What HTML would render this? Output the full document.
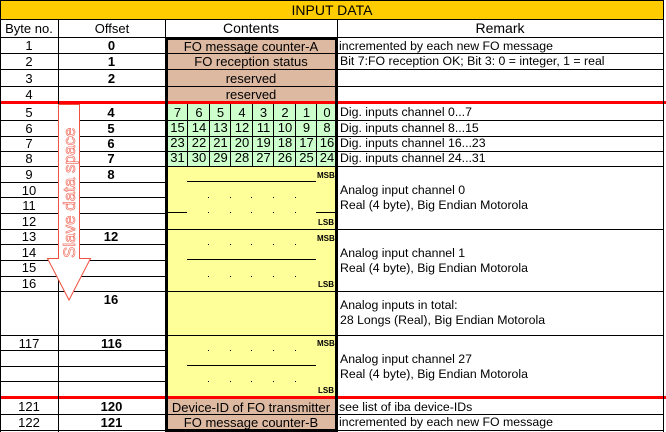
<!DOCTYPE html>
<html><head><style>
*{margin:0;padding:0;box-sizing:border-box}
body{width:666px;height:432px;background:#fff;position:relative;overflow:hidden;font-family:"Liberation Sans",Arial,sans-serif;font-size:12.3px;color:#000}
div{position:absolute}
.h{height:1px;background:#000}
.v{width:1px;background:#000}
.t{white-space:nowrap;line-height:15px}
.c{text-align:center}
.b{font-weight:bold}
.n{font-size:13px}
.br{background:#DDB9A1}
.gr{background:#CCFFCC}
.ye{background:#FFFF99}
.ms{font-size:8px;font-weight:bold;line-height:9px}
</style></head><body>
<div style="left:0;top:0;width:664px;height:20px;background:#FFCC00;border:1px solid #000"></div>
<div class="t c" style="left:0;top:2px;width:664px;font-size:14px;line-height:16px">INPUT DATA</div>
<div class="t c" style="left:0;top:21px;width:58px;font-size:13px">Byte no.</div>
<div class="t c" style="left:58px;top:21px;width:108px;font-size:13px">Offset</div>
<div class="t c" style="left:166px;top:21px;width:170px;font-size:14px">Contents</div>
<div class="t c" style="left:337px;top:21px;width:326px;font-size:14px">Remark</div>

<div class="br" style="left:166px;top:38px;width:170px;height:64px"></div>
<div class="gr" style="left:166px;top:104px;width:170px;height:62px"></div>
<div class="ye" style="left:166px;top:166px;width:170px;height:231px"></div>
<div class="br" style="left:166px;top:399px;width:170px;height:31px"></div>

<div class="h" style="left:0;top:37px;width:664px"></div>
<div class="h" style="left:0;top:53px;width:664px"></div>
<div class="h" style="left:0;top:69px;width:664px"></div>
<div class="h" style="left:0;top:86px;width:664px"></div>
<div class="h" style="left:0;top:120px;width:664px"></div>
<div class="h" style="left:0;top:136px;width:664px"></div>
<div class="h" style="left:0;top:151px;width:664px"></div>
<div class="h" style="left:0;top:166px;width:664px"></div>
<div class="h" style="left:0;top:182px;width:166px"></div>
<div class="h" style="left:0;top:197px;width:166px"></div>
<div class="h" style="left:0;top:213px;width:166px"></div>
<div class="h" style="left:0;top:229px;width:664px"></div>
<div class="h" style="left:0;top:244px;width:166px"></div>
<div class="h" style="left:0;top:260px;width:166px"></div>
<div class="h" style="left:0;top:276px;width:166px"></div>
<div class="h" style="left:0;top:291px;width:664px"></div>
<div class="h" style="left:0;top:335px;width:664px"></div>
<div class="h" style="left:0;top:350px;width:166px"></div>
<div class="h" style="left:0;top:366px;width:166px"></div>
<div class="h" style="left:0;top:381px;width:166px"></div>
<div class="h" style="left:0;top:414px;width:664px"></div>
<div class="h" style="left:0;top:430px;width:664px"></div>
<div style="left:0;top:101px;width:666px;height:3px;background:#FF0000"></div>
<div style="left:0;top:396px;width:666px;height:3px;background:#FF0000"></div>
<div class="v" style="left:0;top:19px;height:413px"></div>
<div class="v" style="left:58px;top:19px;height:413px"></div>
<div class="v" style="left:663px;top:19px;height:413px"></div>
<div class="v" style="left:337px;top:19px;height:19px"></div>
<div style="left:165px;top:19px;width:1px;height:19px;background:#000"></div>
<div style="left:165px;top:37px;width:3px;height:395px;background:#000"></div>
<div style="left:335px;top:37px;width:3px;height:395px;background:#000"></div>
<div style="left:165px;top:37px;width:173px;height:3px;background:#000"></div>
<div style="left:165px;top:429px;width:173px;height:3px;background:#000"></div>

<div class="v" style="left:187px;top:104px;height:62px"></div>
<div class="v" style="left:209px;top:104px;height:62px"></div>
<div class="v" style="left:230px;top:104px;height:62px"></div>
<div class="v" style="left:252px;top:104px;height:62px"></div>
<div class="v" style="left:273px;top:104px;height:62px"></div>
<div class="v" style="left:295px;top:104px;height:62px"></div>
<div class="v" style="left:316px;top:104px;height:62px"></div>

<svg style="position:absolute;left:0;top:0" width="666" height="432">
<path d="M58.5 104.5 L58.5 258.5 L47.5 258.5 L69 300 L90.5 258.5 L79.5 258.5 L79.5 104.5 Z" fill="#fff" stroke="#F05040" stroke-width="1"/>
<text transform="translate(75,258) rotate(-90)" font-family="Liberation Sans" font-size="17" fill="#fff" stroke="#F06050" stroke-width="0.6">Slave data space</text>
</svg>

<div class="t c n" style="left:0;top:38px;width:58px">1</div>
<div class="t c n" style="left:0;top:54px;width:58px">2</div>
<div class="t c n" style="left:0;top:71px;width:58px">3</div>
<div class="t c n" style="left:0;top:87px;width:58px">4</div>
<div class="t c n" style="left:0;top:105px;width:58px">5</div>
<div class="t c n" style="left:0;top:121px;width:58px">6</div>
<div class="t c n" style="left:0;top:136px;width:58px">7</div>
<div class="t c n" style="left:0;top:151px;width:58px">8</div>
<div class="t c n" style="left:0;top:167px;width:58px">9</div>
<div class="t c n" style="left:0;top:183px;width:58px">10</div>
<div class="t c n" style="left:0;top:198px;width:58px">11</div>
<div class="t c n" style="left:0;top:214px;width:58px">12</div>
<div class="t c n" style="left:0;top:229px;width:58px">13</div>
<div class="t c n" style="left:0;top:245px;width:58px">14</div>
<div class="t c n" style="left:0;top:260px;width:58px">15</div>
<div class="t c n" style="left:0;top:276px;width:58px">16</div>
<div class="t c n" style="left:0;top:336px;width:58px">117</div>
<div class="t c n" style="left:0;top:399px;width:58px">121</div>
<div class="t c n" style="left:0;top:415px;width:58px">122</div>
<div class="t c b n" style="left:58px;top:38px;width:107px">0</div>
<div class="t c b n" style="left:58px;top:54px;width:107px">1</div>
<div class="t c b n" style="left:58px;top:71px;width:107px">2</div>
<div class="t c b n" style="left:80px;top:105px;width:62px">4</div>
<div class="t c b n" style="left:80px;top:121px;width:62px">5</div>
<div class="t c b n" style="left:80px;top:136px;width:62px">6</div>
<div class="t c b n" style="left:80px;top:151px;width:62px">7</div>
<div class="t c b n" style="left:80px;top:167px;width:62px">8</div>
<div class="t c b n" style="left:80px;top:229px;width:62px">12</div>
<div class="t c b n" style="left:80px;top:292px;width:62px">16</div>
<div class="t c b n" style="left:58px;top:336px;width:107px">116</div>
<div class="t c b n" style="left:58px;top:399px;width:107px">120</div>
<div class="t c b n" style="left:58px;top:415px;width:107px">121</div>

<div class="t c" style="left:166px;top:39px;width:170px;font-size:13px">FO message counter-A</div>
<div class="t c" style="left:166px;top:54px;width:170px;font-size:13px">FO reception status</div>
<div class="t c" style="left:166px;top:71px;width:170px;font-size:13px">reserved</div>
<div class="t c" style="left:166px;top:87px;width:170px;font-size:13px">reserved</div>
<div class="t c" style="left:166px;top:400px;width:170px;font-size:13px">Device-ID of FO transmitter</div>
<div class="t c" style="left:166px;top:415px;width:170px;font-size:13px">FO message counter-B</div>
<div class="h" style="left:166px;top:53px;width:170px"></div>
<div class="h" style="left:166px;top:69px;width:170px"></div>
<div class="h" style="left:166px;top:86px;width:170px"></div>
<div class="h" style="left:166px;top:414px;width:170px"></div>

<div class="t" style="left:167px;top:105px;width:170px;font-size:13px">
<div style="position:static;display:flex"><span style="width:21px;text-align:center">7</span><span style="width:22px;text-align:center">6</span><span style="width:21px;text-align:center">5</span><span style="width:22px;text-align:center">4</span><span style="width:21px;text-align:center">3</span><span style="width:22px;text-align:center">2</span><span style="width:21px;text-align:center">1</span><span style="width:20px;text-align:center">0</span></div>
<div style="position:static;display:flex"><span style="width:21px;text-align:center">15</span><span style="width:22px;text-align:center">14</span><span style="width:21px;text-align:center">13</span><span style="width:22px;text-align:center">12</span><span style="width:21px;text-align:center">11</span><span style="width:22px;text-align:center">10</span><span style="width:21px;text-align:center">9</span><span style="width:20px;text-align:center">8</span></div>
<div style="position:static;display:flex"><span style="width:21px;text-align:center">23</span><span style="width:22px;text-align:center">22</span><span style="width:21px;text-align:center">21</span><span style="width:22px;text-align:center">20</span><span style="width:21px;text-align:center">19</span><span style="width:22px;text-align:center">18</span><span style="width:21px;text-align:center">17</span><span style="width:20px;text-align:center">16</span></div>
<div style="position:static;display:flex"><span style="width:21px;text-align:center">31</span><span style="width:22px;text-align:center">30</span><span style="width:21px;text-align:center">29</span><span style="width:22px;text-align:center">28</span><span style="width:21px;text-align:center">27</span><span style="width:22px;text-align:center">26</span><span style="width:21px;text-align:center">25</span><span style="width:20px;text-align:center">24</span></div>
</div>

<div class="h" style="left:166px;top:229px;width:170px"></div>
<div class="h" style="left:166px;top:291px;width:170px"></div>
<div class="h" style="left:166px;top:335px;width:170px"></div>
<div class="h" style="left:187px;top:181px;width:129px"></div>
<div class="h" style="left:166px;top:212px;width:21px"></div>
<div class="h" style="left:316px;top:212px;width:20px"></div>
<div class="h" style="left:187px;top:259px;width:129px"></div>
<div class="h" style="left:187px;top:365px;width:129px"></div>
<div class="ms" style="left:317px;top:171px">MSB</div>
<div class="ms" style="left:318px;top:218px">LSB</div>
<div class="ms" style="left:317px;top:234px">MSB</div>
<div class="ms" style="left:318px;top:280px">LSB</div>
<div class="ms" style="left:317px;top:339px">MSB</div>
<div class="ms" style="left:318px;top:386px">LSB</div>
<svg style="position:absolute;left:0;top:0" width="666" height="432">
<g fill="#000">
<rect x="208" y="197" width="1" height="1"/><rect x="230" y="197" width="1" height="1"/><rect x="251" y="197" width="1" height="1"/><rect x="273" y="197" width="1" height="1"/><rect x="295" y="197" width="1" height="1"/>
<rect x="208" y="212" width="1" height="1"/><rect x="230" y="212" width="1" height="1"/><rect x="251" y="212" width="1" height="1"/><rect x="273" y="212" width="1" height="1"/><rect x="295" y="212" width="1" height="1"/>
<rect x="208" y="244" width="1" height="1"/><rect x="230" y="244" width="1" height="1"/><rect x="251" y="244" width="1" height="1"/><rect x="273" y="244" width="1" height="1"/><rect x="295" y="244" width="1" height="1"/>
<rect x="208" y="276" width="1" height="1"/><rect x="230" y="276" width="1" height="1"/><rect x="251" y="276" width="1" height="1"/><rect x="273" y="276" width="1" height="1"/><rect x="295" y="276" width="1" height="1"/>
<rect x="208" y="350" width="1" height="1"/><rect x="230" y="350" width="1" height="1"/><rect x="251" y="350" width="1" height="1"/><rect x="273" y="350" width="1" height="1"/><rect x="295" y="350" width="1" height="1"/>
<rect x="208" y="381" width="1" height="1"/><rect x="230" y="381" width="1" height="1"/><rect x="251" y="381" width="1" height="1"/><rect x="273" y="381" width="1" height="1"/><rect x="295" y="381" width="1" height="1"/>
</g>
</svg>

<div class="t" style="left:339px;top:39px">incremented by each new FO message</div>
<div class="t" style="left:340px;top:54px">Bit 7:FO reception OK; Bit 3: 0 = integer, 1 = real</div>
<div class="t" style="left:340px;top:105px">Dig. inputs channel 0...7</div>
<div class="t" style="left:340px;top:121px">Dig. inputs channel 8...15</div>
<div class="t" style="left:340px;top:136px">Dig. inputs channel 16...23</div>
<div class="t" style="left:340px;top:151px">Dig. inputs channel 24...31</div>
<div class="t" style="left:340px;top:183px">Analog input channel 0<br>Real (4 byte), Big Endian Motorola</div>
<div class="t" style="left:340px;top:246px">Analog input channel 1<br>Real (4 byte), Big Endian Motorola</div>
<div class="t" style="left:340px;top:298px">Analog inputs in total:<br>28 Longs (Real), Big Endian Motorola</div>
<div class="t" style="left:340px;top:352px">Analog input channel 27<br>Real (4 byte), Big Endian Motorola</div>
<div class="t" style="left:339px;top:400px">see list of iba device-IDs</div>
<div class="t" style="left:339px;top:415px">incremented by each new FO message</div>
</body></html>
